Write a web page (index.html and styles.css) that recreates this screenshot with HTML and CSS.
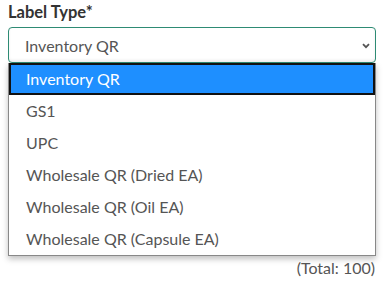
FILE: index.html
```html
<!DOCTYPE html>
<html lang="en">
<head>
  <meta charset="UTF-8" />
  <meta name="viewport" content="width=device-width, initial-scale=1.0"/>
  <title>Label Type</title>
  <link rel="stylesheet" href="styles.css">
</head>
<body>
  <div class="field">
    <label class="field-label">Label Type*</label>

    <div class="select-box">
      <span class="select-value">Inventory QR</span>
      <svg class="chevron" width="8" height="6" viewBox="0 0 8 6">
        <path d="M1 1.2 L4 4.2 L7 1.2" fill="none" stroke="#555" stroke-width="1.8"/>
      </svg>
    </div>

    <ul class="option-list">
      <li class="option selected">Inventory QR</li>
      <li class="option">GS1</li>
      <li class="option">UPC</li>
      <li class="option">Wholesale QR (Dried EA)</li>
      <li class="option">Wholesale QR (Oil EA)</li>
      <li class="option">Wholesale QR (Capsule EA)</li>
    </ul>

    <div class="total">(Total: 100)</div>
  </div>
</body>
</html>
```

FILE: styles.css
```css
body {
  margin: 0;
  font-family: Lato, 'Liberation Sans', sans-serif;
  background: #fff;
  color: #555;
}

.field {
  display: flex;
  flex-direction: column;
  padding: 3px 7px 0 8px;
}

.field-label {
  font-size: 16.5px;
  line-height: 18px;
  font-weight: bold;
  color: #333;
}

.select-box {
  margin-top: 6px;
  height: 34px;
  border: 1px solid #2e8b74;
  border-radius: 4px;
  display: flex;
  align-items: center;
  justify-content: space-between;
  padding: 0 5px 0 16px;
  box-shadow: inset 0 -2px 3px rgba(0, 0, 0, 0.06);
}

.select-value {
  font-size: 16px;
  color: #555;
}

.chevron {
  margin-top: 1px;
}

.option-list {
  list-style: none;
  margin: 0;
  padding: 0;
  border: 1px solid #888;
  border-top: none;
  box-shadow: 0 3px 6px rgba(0, 0, 0, 0.25);
}

.option {
  height: 32px;
  line-height: 32px;
  font-size: 16px;
  padding-left: 17px;
  color: #555;
}

.option.selected {
  height: 28px;
  line-height: 28px;
  padding-left: 15px;
  background: #1e8fff;
  border: 2px solid #111;
  color: #fff;
}

.total {
  margin: 3px 1px 0 0;
  align-self: flex-end;
  font-size: 16px;
  line-height: 18px;
  color: #555;
}
```
